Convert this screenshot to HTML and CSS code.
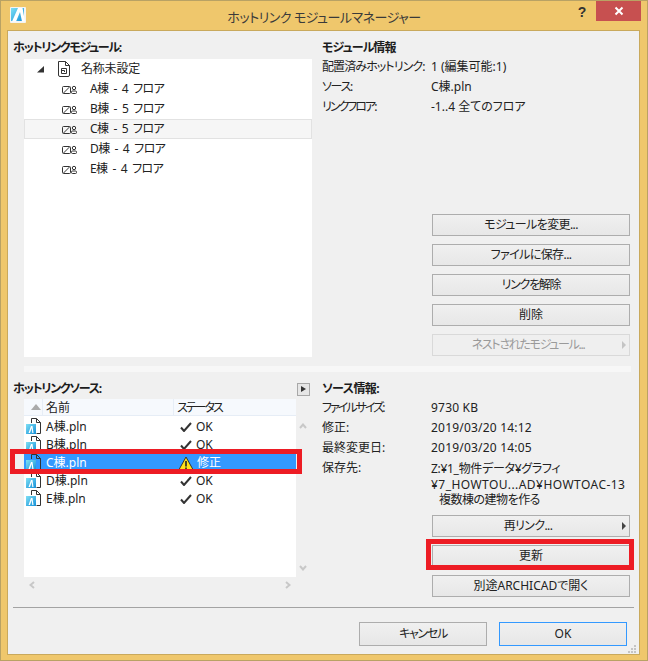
FILE: index.html
```html
<!DOCTYPE html>
<html lang="ja">
<head>
<meta charset="utf-8">
<title>ホットリンク モジュールマネージャー</title>
<link rel="stylesheet" href="styles.css">
</head>
<body>
<svg class="defs" width="0" height="0">
  <defs>
    <linearGradient id="blue" x1="0" y1="0" x2="1" y2="1"><stop offset="0" stop-color="#7fe0f5"/><stop offset="1" stop-color="#1590d8"/></linearGradient>
    <symbol id="file" viewBox="0 0 15 16">
      <path d="M5.500 .5H10.500L14.500 4.500V15.500H10.500M14.500 4.500H10.500V.5" fill="none" stroke="#333"/>
      <path d="M5.500 .5V5" fill="none" stroke="#333"/>
      <rect x="0" y="6" width="10" height="10" fill="url(#blue)"/>
      <path d="M2.500 15L5 8H6.500L7.500 15H6.300L5.700 10L4 15Z" fill="#fff"/>
    </symbol>
    <symbol id="mod" viewBox="0 0 15 9">
      <rect x="0.500" y="1.500" width="8" height="7" rx="1" fill="none" stroke="#333"/>
      <path d="M1.500 8L7.500 2" stroke="#333" fill="none"/>
      <circle cx="12" cy="3" r="1.700" fill="none" stroke="#333"/>
      <rect x="9.500" y="6" width="5" height="2.500" rx="1" fill="none" stroke="#333"/>
    </symbol>
    <symbol id="check" viewBox="0 0 12 10">
      <path d="M1 5.500L4 9L11 1" fill="none" stroke="#333" stroke-width="2"/>
    </symbol>
  </defs>
</svg>
<div class="window">
  <header class="titlebar">
    <svg class="appicon" width="16" height="16" viewBox="0 0 16 16">
      <rect width="16" height="16" rx="1" fill="#f4f4f4"/>
      <rect x="1" y="1" width="13" height="13" fill="url(#blue)"/>
      <path d="M2 14.500L8 1H12.500L15 14.500H12L10 5L6 14.500Z" fill="#fff"/>
    </svg>
    <h1 class="title">ホットリンク モジュールマネージャー</h1>
    <span class="help">?</span>
    <span class="close"><svg width="10" height="10" viewBox="0 0 10 10"><path d="M1.500 1.500L8.500 8.500M8.500 1.500L1.500 8.500" stroke="#fff" stroke-width="2"/></svg></span>
  </header>
  <main class="client">
    <section class="pane upper">
      <div class="left">
        <h2 class="heading k3">ホットリンクモジュール:</h2>
        <ul class="tree">
          <li class="tree-root">
            <svg class="twisty" width="8" height="7" viewBox="0 0 8 7"><path d="M7 0V6.500H0Z" fill="#333"/></svg>
            <svg class="docicon" width="13" height="16" viewBox="0 0 13 16"><path d="M1.500 .5H8.500L12.500 4.500V14A1.500 1.500 0 0 1 11 15.500H3A1.500 1.500 0 0 1 1.500 14ZM8.500 .5V4.500H12.500" fill="none" stroke="#333"/><path d="M4.500 7.500H9.500V12.500H4.500ZM4.500 9.500H7.500V11" fill="none" stroke="#333"/></svg>
            <span class="label root-label">名称未設定</span>
          </li>
          <li class="tree-item"><svg class="modicon"><use href="#mod"/></svg><span class="label">A棟 - 4 フロア</span></li>
          <li class="tree-item"><svg class="modicon"><use href="#mod"/></svg><span class="label">B棟 - 5 フロア</span></li>
          <li class="tree-item hover"><svg class="modicon"><use href="#mod"/></svg><span class="label">C棟 - 5 フロア</span></li>
          <li class="tree-item"><svg class="modicon"><use href="#mod"/></svg><span class="label">D棟 - 4 フロア</span></li>
          <li class="tree-item"><svg class="modicon"><use href="#mod"/></svg><span class="label">E棟 - 4 フロア</span></li>
        </ul>
      </div>
      <div class="right">
        <h2 class="heading k2">モジュール情報</h2>
        <dl class="info">
          <dt class="k2">配置済みホットリンク:</dt><dd>1 (編集可能:1)</dd>
          <dt class="k3">ソース:</dt><dd>C棟.pln</dd>
          <dt class="k4">リンクフロア:</dt><dd>-1..4 全てのフロア</dd>
        </dl>
        <div class="buttons push">
          <button class="btn k1">モジュールを変更...</button>
          <button class="btn k1">ファイルに保存...</button>
          <button class="btn k3">リンクを解除</button>
          <button class="btn">削除</button>
          <button class="btn disabled k3 has-caret">ネストされたモジュール...<span class="caret"></span></button>
        </div>
      </div>
    </section>
    <div class="splitter"></div>
    <section class="pane lower">
      <div class="left">
        <div class="heading-row">
          <h2 class="heading k3">ホットリンクソース:</h2>
          <span class="expand"></span>
        </div>
        <div class="listwrap">
          <div class="listbox">
            <div class="list-head">
              <span class="col-sort"><svg width="10" height="6" viewBox="0 0 10 6"><path d="M5 0L10 6H0Z" fill="#aaa"/></svg></span>
              <span class="col-name">名前</span>
              <span class="col-status k4">ステータス</span>
            </div>
            <ul class="rows">
              <li class="row"><svg class="fileicon"><use href="#file"/></svg><span class="name">A棟.pln</span><svg class="check"><use href="#check"/></svg><span>OK</span></li>
              <li class="row"><svg class="fileicon"><use href="#file"/></svg><span class="name">B棟.pln</span><svg class="check"><use href="#check"/></svg><span>OK</span></li>
              <li class="row selected"><svg class="fileicon"><use href="#file"/></svg><span class="name">C棟.pln</span>
                <svg class="warn" width="16" height="15" viewBox="0 0 16 15"><path d="M8 1L15.500 14.500H.5Z" fill="#ffe11a" stroke="#333"/><path d="M8 5V10.500M8 11.500V13" stroke="#222" stroke-width="1.600"/></svg>
                <span>修正</span></li>
              <li class="row"><svg class="fileicon"><use href="#file"/></svg><span class="name">D棟.pln</span><svg class="check"><use href="#check"/></svg><span>OK</span></li>
              <li class="row"><svg class="fileicon"><use href="#file"/></svg><span class="name">E棟.pln</span><svg class="check"><use href="#check"/></svg><span>OK</span></li>
            </ul>
            <span class="redframe row-frame"></span>
          </div>
          <div class="vscroll">
            <svg width="8" height="6" viewBox="0 0 8 6"><path d="M1 5L4 1.500L7 5" fill="none" stroke="#c8c8c8" stroke-width="2"/></svg>
            <svg width="8" height="6" viewBox="0 0 8 6"><path d="M1 1L4 4.500L7 1" fill="none" stroke="#c8c8c8" stroke-width="2"/></svg>
          </div>
        </div>
        <div class="hscroll">
          <svg width="6" height="8" viewBox="0 0 6 8"><path d="M5 1L1.500 4L5 7" fill="none" stroke="#c8c8c8" stroke-width="2"/></svg>
          <svg width="6" height="8" viewBox="0 0 6 8"><path d="M1 1L4.500 4L1 7" fill="none" stroke="#c8c8c8" stroke-width="2"/></svg>
        </div>
      </div>
      <div class="right">
        <h2 class="heading k1">ソース情報:</h2>
        <dl class="info">
          <dt class="k4">ファイルサイズ:</dt><dd class="wide-latin">9730 KB</dd>
          <dt>修正:</dt><dd class="wide-latin">2019/03/20 14:12</dd>
          <dt>最終変更日:</dt><dd class="wide-latin">2019/03/20 14:05</dd>
          <dt>保存先:</dt>
          <dd class="path"><span class="path-jp">Z:¥1_物件データ¥グラフィ</span><br><span class="path-latin">¥7_HOWTOU...AD¥HOWTOAC-13</span><br><span class="indent">複数棟の建物を作る</span></dd>
        </dl>
        <div class="buttons push2">
          <button class="btn k1 has-caret">再リンク...<span class="caret dark"></span></button>
          <div class="framed">
            <button class="btn">更新</button>
            <span class="redframe btn-frame"></span>
          </div>
          <button class="btn">別途ARCHICADで開く</button>
        </div>
      </div>
    </section>
    <hr class="sep">
    <footer class="footer">
      <button class="btn wide k3">キャンセル</button>
      <button class="btn wide default">OK</button>
    </footer>
    <svg class="grip" width="9" height="8" viewBox="0 0 9 8"><path d="M6 0h2v2H6zM3 3h2v2H3zM6 3h2v2H6zM0 6h2v2H0zM3 6h2v2H3zM6 6h2v2H6z" fill="#c4c4c4"/></svg>
  </main>
</div>
</body>
</html>
```
FILE: styles.css
```css
* { box-sizing: border-box; }
html, body { margin: 0; padding: 0; }
body {
  width: 648px;
  height: 661px;
  overflow: hidden;
  font-family: "Noto Sans", "Noto Sans CJK JP", sans-serif;
  font-size: 12px;
  color: #222;
  font-feature-settings: "palt";
}
ul, dl, dd, dt, h1, h2 { margin: 0; padding: 0; list-style: none; font-weight: normal; }
.defs { position: absolute; }

.k1 { letter-spacing: -0.6px; }
.k2 { letter-spacing: -0.9px; }
.k3 { letter-spacing: -1.3px; }
.k4 { letter-spacing: -2px; }

.window {
  width: 648px;
  height: 661px;
  display: flex;
  flex-direction: column;
  background: #efc76c;
  border: 1px solid #b9a264;
}
.titlebar {
  height: 29px;
  display: flex;
  align-items: flex-start;
  position: relative;
  flex: none;
}
.appicon { margin: 6px 0 0 9px; }
.title {
  position: absolute;
  left: 0;
  right: 0;
  top: 6px;
  text-align: center;
  font-size: 13px;
  letter-spacing: -0.5px;
  line-height: 20px;
  color: #3a3a3a;
}
.help {
  margin: 2px 0 0 auto;
  width: 14px;
  text-align: center;
  font: bold 14px/18px "Liberation Sans", sans-serif;
  color: #333;
}
.close {
  width: 45px;
  height: 20px;
  margin: 0 6px 0 7px;
  background: #c75050;
  display: flex;
  align-items: center;
  justify-content: center;
}

.client {
  position: relative;
  flex: none;
  margin: 0 7px 0 6px;
  height: 625px;
  background: #f0f0f0;
  border: 1px solid #c9a95c;
  padding: 8px 0 0 5px;
}
.pane { display: flex; }
.left { width: 299px; flex: none; position: relative; }
.right { width: 308px; flex: none; margin-left: 10px; display: flex; flex-direction: column; }
.heading { font-weight: 700; font-size: 12px; line-height: 17px; color: #1c1c1c; white-space: nowrap; }

.tree {
  margin: 3px 0 0 11px;
  height: 298px;
  width: 288px;
  background: #fff;
}
.tree-root, .tree-item { height: 20px; display: flex; align-items: center; font-size: 12px; }
.label { padding-bottom: 2px; letter-spacing: -0.6px; word-spacing: 2.5px; }
.root-label { letter-spacing: -0.2px; }
.tree-root { padding-left: 13px; }
.twisty { margin-right: 12px; }
.docicon { margin-right: 11px; }
.tree-item { padding-left: 38px; }
.modicon { width: 15px; height: 9px; margin-right: 13px; }
.tree-item.hover { background: #f6f6f6; border: 1px solid #e2e2e2; padding-left: 37px; }

.info { display: grid; grid-template-columns: 109px 1fr; grid-auto-rows: 20px; line-height: 20px; margin-top: 1px; }
.info dt, .info dd { white-space: nowrap; }
.info .path { line-height: 15.5px; padding-top: 3px; }
.wide-latin { letter-spacing: 0.2px; }
.path-jp { letter-spacing: -0.3px; }
.path-latin { letter-spacing: 0.45px; }
.indent { padding-left: 8px; letter-spacing: -0.5px; }

.buttons { display: flex; flex-direction: column; gap: 8px; margin-left: 110px; width: 198px; }
.push { margin-top: auto; padding-bottom: 1px; }
.push2 { margin-top: 37px; }
.btn {
  position: relative;
  display: block;
  width: 198px;
  height: 22px;
  padding: 0;
  font-family: inherit;
  font-size: 12px;
  font-feature-settings: "palt";
  color: #222;
  line-height: 20px;
  text-align: center;
  background: #ececec;
  background-image: linear-gradient(#f0f0f0, #e7e7e7);
  border: 1px solid #adadad;
  border-radius: 0;
}
.btn.has-caret { padding-right: 6px; }
.btn.disabled { color: #9a9a9a; background: #efefef; border-color: #d9d9d9; }
.caret {
  position: absolute;
  right: 3px;
  top: 6px;
  border-left: 4px solid #c4c4c4;
  border-top: 4px solid transparent;
  border-bottom: 4px solid transparent;
}
.caret.dark { border-left-color: #444; }
.framed { position: relative; }

.splitter { height: 6px; margin: 9px 0 0 11px; width: 607px; background: #f7f7f7; }

.lower { margin-top: 7px; }
.lower .heading { padding-top: 1px; line-height: 17px; }
.heading-row { display: flex; justify-content: space-between; align-items: flex-start; height: 17px; }
.expand {
  width: 13px;
  height: 13px;
  margin: 4px 2px 0 0;
  position: relative;
  background: #e6e6e6;
  border: 1px solid #a8a8a8;
}
.expand::after {
  content: "";
  position: absolute;
  left: 3px;
  top: 2px;
  border-left: 5px solid #333;
  border-top: 3.5px solid transparent;
  border-bottom: 3.5px solid transparent;
}
.listwrap { display: flex; margin: 3px 0 0 11px; }
.listbox { position: relative; width: 272px; height: 178px; background: #fff; }
.list-head { display: flex; height: 17px; line-height: 17px; background: #f6f9fd; border-bottom: 1px solid #e6edf6; }
.col-sort { width: 19px; display: flex; align-items: center; justify-content: flex-end; padding-right: 1px; border-right: 1px solid #e6edf6; }
.col-name { width: 131px; padding-left: 3px; border-right: 1px solid #e6edf6; }
.col-status { flex: 1; padding-left: 3px; }
.rows { padding-top: 2px; }
.row { height: 18px; display: flex; align-items: center; line-height: 18px; font-size: 12px; color: #222; }
.fileicon { width: 15px; height: 16px; margin: 0 5px 3px 2px; flex: none; }
.name { width: 134px; flex: none; }
.check { width: 12px; height: 10px; margin-right: 4px; flex: none; }
.warn { margin: 0 3px 0 -2px; flex: none; }
.row.selected { background: #3399ff; color: #fff; }

.redframe { position: absolute; border: 5px solid #ed1c24; pointer-events: none; }
.row-frame { left: -14px; right: -6px; top: 50px; height: 25px; }
.btn-frame { left: -6px; right: -4px; top: -6px; height: 31px; }

.vscroll {
  width: 15px;
  padding: 24px 0 6px 3px;
  display: flex;
  flex-direction: column;
  justify-content: space-between;
}
.hscroll {
  width: 268px;
  margin: 4px 0 0 16px;
  padding-right: 6px;
  display: flex;
  justify-content: space-between;
}

.sep { margin: 0; position: absolute; left: 5px; top: 576px; width: 621px; height: 1px; border: 0; background: #a3a3a3; }
.footer { position: absolute; left: 351px; top: 591px; display: flex; gap: 12px; }
.btn.wide { width: 128px; height: 24px; line-height: 22px; }
.btn.default { border-color: #3399ff; }
.grip { position: absolute; right: 2px; bottom: 1px; }
```
